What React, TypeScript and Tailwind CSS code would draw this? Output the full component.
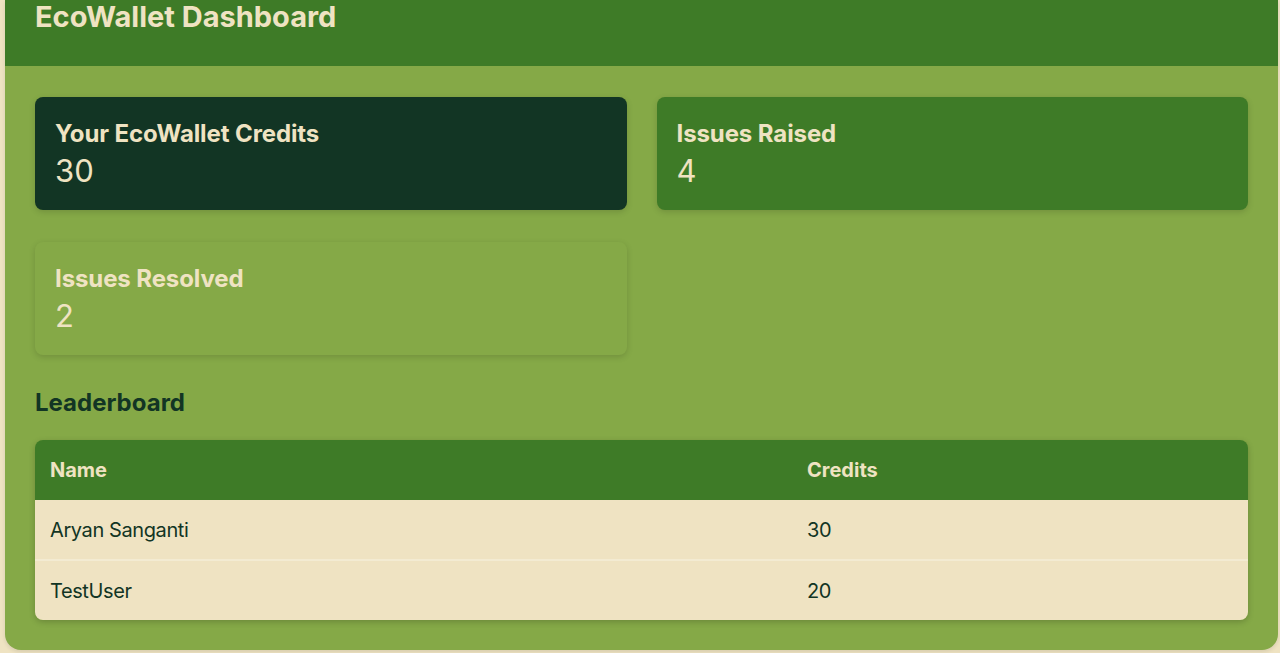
import React from "react";

const stats = [
  { label: "Your EcoWallet Credits", value: "30", tone: "dark" },
  { label: "Issues Raised", value: "4", tone: "mid" },
  { label: "Issues Resolved", value: "2", tone: "light" },
];

const leaders = [
  { name: "Aryan Sanganti", credits: 30 },
  { name: "TestUser", credits: 20 },
];

const toneClass: Record<string, string> = {
  dark: "bg-[#123524]",
  mid: "bg-[#3e7b27]",
  light: "bg-[#85a947]",
};

const StatCard = ({ label, value, tone }: { label: string; value: string; tone: string }) => (
  <div
    className={`${toneClass[tone]} h-[113px] rounded-lg px-5 pt-[21px] text-[#efe3c2] shadow-[0_2px_6px_rgba(0,0,0,0.15)]`}
  >
    <h3 className="text-[24px] font-bold leading-[32px] tracking-[-0.1px]">{label}</h3>
    <p className="mt-[3px] text-[31px] leading-[36px]">{value}</p>
  </div>
);

export default function App() {
  return (
    <div
      className="h-[653px] w-[1280px] overflow-hidden bg-[#efe3c2]"
      style={{ fontFamily: "Inter, 'Noto Sans', sans-serif" }}
    >
      <div className="ml-[5px] h-[650px] w-[1273px] overflow-hidden rounded-b-2xl bg-[#85a947] shadow-[0_2px_4px_rgba(0,0,0,0.1)]">
        <header className="h-[66px] bg-[#3e7b27] px-[30px]">
          <h1 className="pt-[1px] text-[29px] font-bold leading-[32px] text-[#efe3c2]">
            EcoWallet Dashboard
          </h1>
        </header>

        <main className="px-[30px] pt-[31px]">
          <div className="grid grid-cols-2 gap-x-[30px] gap-y-[32px]">
            {stats.map((s) => (
              <StatCard key={s.label} {...s} />
            ))}
          </div>

          <h2 className="mt-[32px] text-[24px] font-bold leading-[32px] text-[#123524]">
            Leaderboard
          </h2>

          <div className="mt-[21px] overflow-hidden rounded-lg shadow-[0_2px_6px_rgba(0,0,0,0.2)]">
            <table className="w-full border-collapse text-left text-[20px]">
              <thead className="bg-[#3e7b27] text-[#efe3c2]">
                <tr className="h-[60px]">
                  <th className="w-[757px] px-[15px] font-bold">Name</th>
                  <th className="px-[15px] font-bold">Credits</th>
                </tr>
              </thead>
              <tbody className="bg-[#efe3c2] text-[#123524]">
                {leaders.map((l, i) => (
                  <tr
                    key={l.name}
                    className={`h-[60px] tracking-[-0.4px] ${i > 0 ? "border-t-2 border-[#f3ebd2]" : ""}`}
                  >
                    <td className="px-[15px]">{l.name}</td>
                    <td className="px-[15px]">{l.credits}</td>
                  </tr>
                ))}
              </tbody>
            </table>
          </div>
        </main>
      </div>
    </div>
  );
}
